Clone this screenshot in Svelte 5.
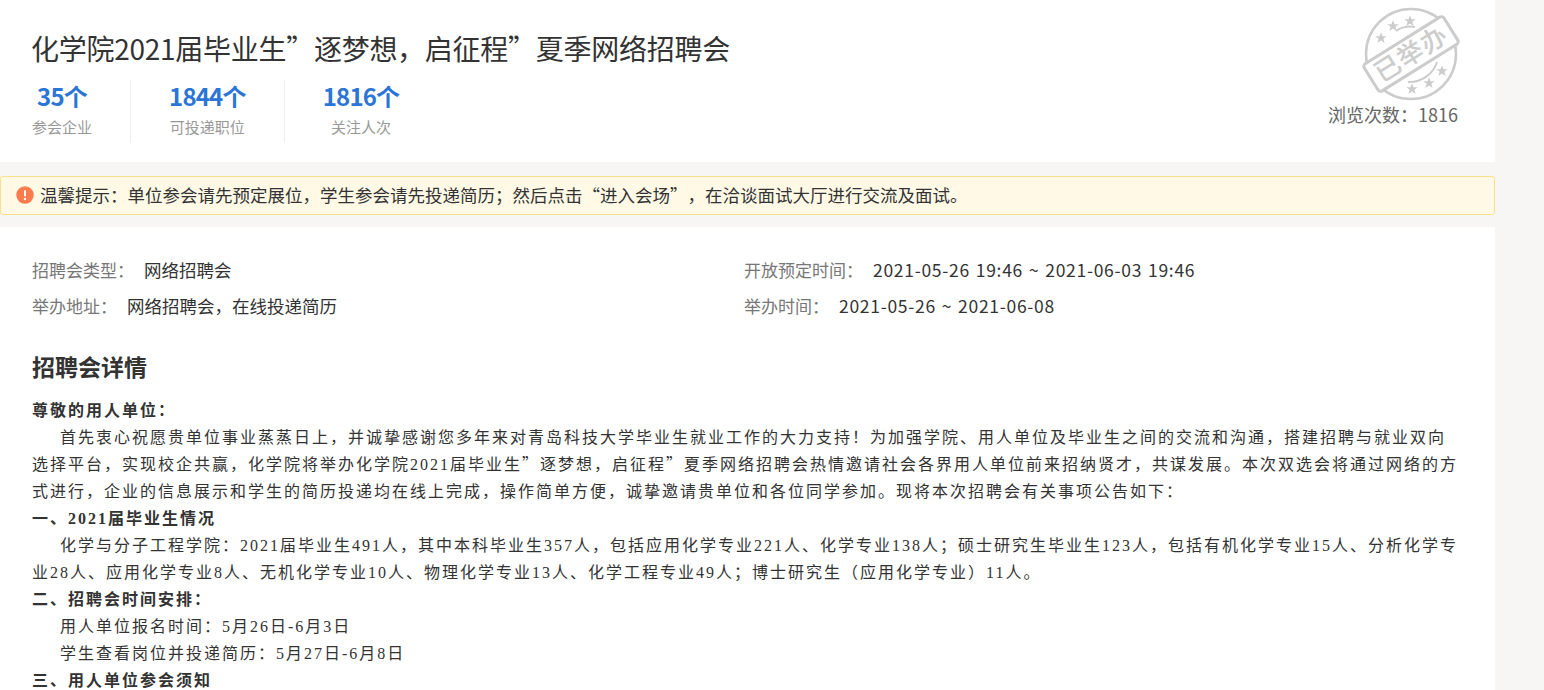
<script>
  const stats = [
    { num: "35个", label: "参会企业" },
    { num: "1844个", label: "可投递职位" },
    { num: "1816个", label: "关注人次" }
  ];
  // star centres around the stamp ring
  const stars = [
    [-1, -33], [-18, -28], [-30, -16], [31, 17], [18, 29], [1, 35]
  ];
</script>

<main>
  <section class="head">
    <div class="head-left">
      <h1>化学院2021届毕业生”逐梦想，启征程”夏季网络招聘会</h1>
      <div class="stats">
        {#each stats as s}
          <div class="stat">
            <div class="num">{s.num}</div>
            <div class="label">{s.label}</div>
          </div>
        {/each}
      </div>
    </div>
    <div class="head-right">
      <svg class="stamp" width="104" height="94" viewBox="-52 -47 104 94">
        <circle cx="0" cy="0" r="45" fill="none" stroke="#ccc" stroke-width="2.5" />
        <path d="M-15 -23A27 27 0 0 1 4-27" fill="none" stroke="#ccc" stroke-width="2" />
        <path d="M-3 28A29 29 0 0 0 26 8" fill="none" stroke="#ccc" stroke-width="2" />
        <g transform="rotate(-32)">
          <rect x="-47" y="-16" width="94" height="32" rx="3" fill="#fff" stroke="#ccc" stroke-width="3" />
          <text x="0" y="9" text-anchor="middle" class="stamp-text">已举办</text>
        </g>
        {#each stars as p}
          <polygon transform="translate({p[0]} {p[1]}) scale(1.3)" points="0,-4.5 1.2,-1.4 4.4,-1.4 1.8,.6 2.8,3.8 0,1.9 -2.8,3.8 -1.8,.6 -4.4,-1.4 -1.2,-1.4" fill="#ccc" />
        {/each}
      </svg>
      <div class="views">浏览次数：1816</div>
    </div>
  </section>

  <div class="notice">
    <svg width="18" height="18" viewBox="0 0 18 18">
      <circle cx="9" cy="9" r="8.7" fill="#ff7a4d" />
      <rect x="8" y="4" width="2" height="6.5" rx="1" fill="#fff" />
      <circle cx="9" cy="13" r="1.2" fill="#fff" />
    </svg>
    <span>温馨提示：单位参会请先预定展位，学生参会请先投递简历；然后点击“进入会场”，在洽谈面试大厅进行交流及面试。</span>
  </div>

  <section class="body">
    <div class="meta">
      <div class="meta-item"><span class="key">招聘会类型：</span><span class="val type">网络招聘会</span></div>
      <div class="meta-item"><span class="key">开放预定时间：</span><span class="val date">2021-05-26 19:46 ~ 2021-06-03 19:46</span></div>
      <div class="meta-item"><span class="key">举办地址：</span><span class="val">网络招聘会，在线投递简历</span></div>
      <div class="meta-item"><span class="key">举办时间：</span><span class="val date">2021-05-26 ~ 2021-06-08</span></div>
    </div>
    <h2>招聘会详情</h2>
    <div class="article">
      <p><b>尊敬的用人单位：</b></p>
      <p class="in">首先衷心祝愿贵单位事业蒸蒸日上，并诚挚感谢您多年来对青岛科技大学毕业生就业工作的大力支持！为加强学院、用人单位及毕业生之间的交流和沟通，搭建招聘与就业双向选择平台，实现校企共赢，化学院将举办化学院2021届毕业生<span class="q">”</span>逐梦想，启征程<span class="q">”</span>夏季网络招聘会热情邀请社会各界用人单位前来招纳贤才，共谋发展。本次双选会将通过网络的方式进行，企业的信息展示和学生的简历投递均在线上完成，操作简单方便，诚挚邀请贵单位和各位同学参加。现将本次招聘会有关事项公告如下：</p>
      <p><b>一、2021届毕业生情况</b></p>
      <p class="in">化学与分子工程学院：2021届毕业生491人，其中本科毕业生357人，包括应用化学专业221人、化学专业138人；硕士研究生毕业生123人，包括有机化学专业15人、分析化学专业28人、应用化学专业8人、无机化学专业10人、物理化学专业13人、化学工程专业49人；博士研究生（应用化学专业）11人。</p>
      <p><b>二、招聘会时间安排：</b></p>
      <p class="in">用人单位报名时间：5月26日-6月3日</p>
      <p class="in">学生查看岗位并投递简历：5月27日-6月8日</p>
      <p><b>三、用人单位参会须知</b></p>
    </div>
  </section>
</main>

<style>
  :global(body) {
    background: #f7f6f5;
    overflow: hidden;
  }
  main {
    width: 1495px;
    height: 690px;
    overflow: hidden;
    font-family: "Noto Sans CJK SC", "Liberation Sans", sans-serif;
    color: #333;
    text-spacing-trim: space-all;
  }
  .head {
    height: 162px;
    box-sizing: border-box;
    background: #fff;
    padding: 27px 37px 0 32px;
    display: flex;
    justify-content: space-between;
  }
  h1 {
    margin: 0 0 0 -1px;
    font-size: 28px;
    line-height: 42px;
    font-weight: 400;
    letter-spacing: -0.27px;
    color: #333;
  }
  .stats {
    display: flex;
    margin-top: 11px;
  }
  .stat {
    height: 63px;
    padding-right: 38px;
    margin-right: 38px;
    border-right: 1px solid #eee;
    text-align: center;
  }
  .stat:last-child {
    border-right: 0;
  }
  .num {
    font-size: 24px;
    line-height: 32px;
    font-weight: 700;
    letter-spacing: -0.8px;
    color: #2a75d6;
  }
  .label {
    font-size: 15px;
    line-height: 20px;
    margin-top: 5px;
    color: #999;
  }
  .head-right {
    display: flex;
    flex-direction: column;
    align-items: flex-end;
    margin-top: -20px;
  }
  .stamp {
    margin-right: -5px;
  }
  .stamp-text {
    font-size: 26px;
    font-weight: 500;
    letter-spacing: 1px;
    fill: #ccc;
  }
  .views {
    font-size: 18px;
    line-height: 26px;
    color: #666;
  }
  .notice {
    margin-top: 14px;
    height: 39px;
    box-sizing: border-box;
    background: #fff9e6;
    border: 1px solid #ffe08a;
    border-radius: 3px;
    display: flex;
    align-items: center;
    gap: 6px;
    padding: 0 0 2px 15px;
    font-size: 17.5px;
  }
  .body {
    margin-top: 12px;
    background: #fff;
    padding: 31px 32px 0;
    height: 500px;
  }
  .meta {
    display: grid;
    grid-template-columns: 712px 1fr;
    row-gap: 12px;
  }
  .meta-item {
    line-height: 24px;
  }
  .key {
    font-size: 17px;
    color: #777;
    margin-right: 10px;
  }
  .val {
    font-size: 17.5px;
  }
  .date {
    letter-spacing: 0.7px;
    word-spacing: 1.3px;
  }
  h2 {
    margin: 32px 0 0;
    font-size: 23px;
    line-height: 32px;
    font-weight: 700;
  }
  .article {
    margin-top: 15px;
    width: 1431px;
    font-family: "Liberation Serif", "Noto Sans CJK SC", serif;
    font-size: 16px;
    line-height: 27px;
    letter-spacing: 2px;
    color: #333;
  }
  .article p {
    margin: 0;
  }
  .in {
    text-indent: 28px;
  }
  .q {
    font-family: "Noto Sans CJK SC", sans-serif;
    line-height: 1;
  }
</style>
